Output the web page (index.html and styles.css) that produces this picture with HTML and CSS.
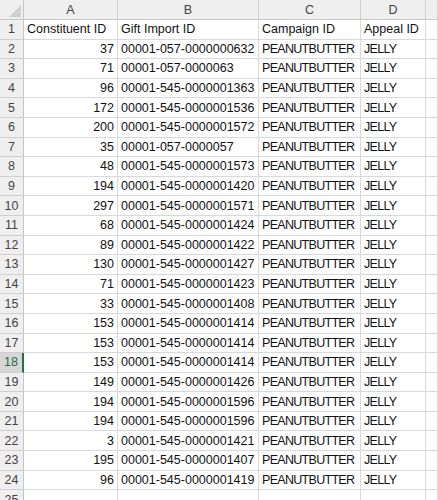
FILE: index.html
```html
<!DOCTYPE html>
<html>
<head>
<meta charset="utf-8">
<link rel="stylesheet" href="styles.css">
</head>
<body>
<div class="sheet">
  <div class="corner"><span class="tri"></span></div>
  <div class="colhead">A</div>
  <div class="colhead">B</div>
  <div class="colhead">C</div>
  <div class="colhead">D</div>
  <div class="colhead"></div>

  <div class="rowhead">1</div><div class="cell">Constituent ID</div><div class="cell">Gift Import ID</div><div class="cell">Campaign ID</div><div class="cell">Appeal ID</div><div class="cell"></div>
  <div class="rowhead">2</div><div class="cell num">37</div><div class="cell">00001-057-0000000632</div><div class="cell caps">PEANUTBUTTER</div><div class="cell caps">JELLY</div><div class="cell"></div>
  <div class="rowhead">3</div><div class="cell num">71</div><div class="cell">00001-057-0000063</div><div class="cell caps">PEANUTBUTTER</div><div class="cell caps">JELLY</div><div class="cell"></div>
  <div class="rowhead">4</div><div class="cell num">96</div><div class="cell">00001-545-0000001363</div><div class="cell caps">PEANUTBUTTER</div><div class="cell caps">JELLY</div><div class="cell"></div>
  <div class="rowhead">5</div><div class="cell num">172</div><div class="cell">00001-545-0000001536</div><div class="cell caps">PEANUTBUTTER</div><div class="cell caps">JELLY</div><div class="cell"></div>
  <div class="rowhead">6</div><div class="cell num">200</div><div class="cell">00001-545-0000001572</div><div class="cell caps">PEANUTBUTTER</div><div class="cell caps">JELLY</div><div class="cell"></div>
  <div class="rowhead">7</div><div class="cell num">35</div><div class="cell">00001-057-0000057</div><div class="cell caps">PEANUTBUTTER</div><div class="cell caps">JELLY</div><div class="cell"></div>
  <div class="rowhead">8</div><div class="cell num">48</div><div class="cell">00001-545-0000001573</div><div class="cell caps">PEANUTBUTTER</div><div class="cell caps">JELLY</div><div class="cell"></div>
  <div class="rowhead">9</div><div class="cell num">194</div><div class="cell">00001-545-0000001420</div><div class="cell caps">PEANUTBUTTER</div><div class="cell caps">JELLY</div><div class="cell"></div>
  <div class="rowhead">10</div><div class="cell num">297</div><div class="cell">00001-545-0000001571</div><div class="cell caps">PEANUTBUTTER</div><div class="cell caps">JELLY</div><div class="cell"></div>
  <div class="rowhead">11</div><div class="cell num">68</div><div class="cell">00001-545-0000001424</div><div class="cell caps">PEANUTBUTTER</div><div class="cell caps">JELLY</div><div class="cell"></div>
  <div class="rowhead">12</div><div class="cell num">89</div><div class="cell">00001-545-0000001422</div><div class="cell caps">PEANUTBUTTER</div><div class="cell caps">JELLY</div><div class="cell"></div>
  <div class="rowhead">13</div><div class="cell num">130</div><div class="cell">00001-545-0000001427</div><div class="cell caps">PEANUTBUTTER</div><div class="cell caps">JELLY</div><div class="cell"></div>
  <div class="rowhead">14</div><div class="cell num">71</div><div class="cell">00001-545-0000001423</div><div class="cell caps">PEANUTBUTTER</div><div class="cell caps">JELLY</div><div class="cell"></div>
  <div class="rowhead">15</div><div class="cell num">33</div><div class="cell">00001-545-0000001408</div><div class="cell caps">PEANUTBUTTER</div><div class="cell caps">JELLY</div><div class="cell"></div>
  <div class="rowhead">16</div><div class="cell num">153</div><div class="cell">00001-545-0000001414</div><div class="cell caps">PEANUTBUTTER</div><div class="cell caps">JELLY</div><div class="cell"></div>
  <div class="rowhead">17</div><div class="cell num">153</div><div class="cell">00001-545-0000001414</div><div class="cell caps">PEANUTBUTTER</div><div class="cell caps">JELLY</div><div class="cell"></div>
  <div class="rowhead sel">18</div><div class="cell num">153</div><div class="cell">00001-545-0000001414</div><div class="cell caps">PEANUTBUTTER</div><div class="cell caps">JELLY</div><div class="cell"></div>
  <div class="rowhead">19</div><div class="cell num">149</div><div class="cell">00001-545-0000001426</div><div class="cell caps">PEANUTBUTTER</div><div class="cell caps">JELLY</div><div class="cell"></div>
  <div class="rowhead">20</div><div class="cell num">194</div><div class="cell">00001-545-0000001596</div><div class="cell caps">PEANUTBUTTER</div><div class="cell caps">JELLY</div><div class="cell"></div>
  <div class="rowhead">21</div><div class="cell num">194</div><div class="cell">00001-545-0000001596</div><div class="cell caps">PEANUTBUTTER</div><div class="cell caps">JELLY</div><div class="cell"></div>
  <div class="rowhead">22</div><div class="cell num">3</div><div class="cell">00001-545-0000001421</div><div class="cell caps">PEANUTBUTTER</div><div class="cell caps">JELLY</div><div class="cell"></div>
  <div class="rowhead">23</div><div class="cell num">195</div><div class="cell">00001-545-0000001407</div><div class="cell caps">PEANUTBUTTER</div><div class="cell caps">JELLY</div><div class="cell"></div>
  <div class="rowhead">24</div><div class="cell num">96</div><div class="cell">00001-545-0000001419</div><div class="cell caps">PEANUTBUTTER</div><div class="cell caps">JELLY</div><div class="cell"></div>
  <div class="rowhead">25</div><div class="cell"></div><div class="cell"></div><div class="cell"></div><div class="cell"></div><div class="cell"></div>
</div>
</body>
</html>
```
FILE: styles.css
```css
html, body {
  margin: 0;
  padding: 0;
  background: #ffffff;
  overflow: hidden;
}
.sheet {
  display: grid;
  grid-template-columns: 24px 94px 141px 102px 65px 12px;
  grid-template-rows: 20px;
  grid-auto-rows: 19.6px;
  font-family: "Liberation Sans", Arial, sans-serif;
  font-size: 12.5px;
  color: #111;
}
.sheet > div {
  box-sizing: border-box;
  border-right: 1px solid #d9d9d9;
  border-bottom: 1px solid #d9d9d9;
  white-space: nowrap;
  overflow: hidden;
  display: flex;
  align-items: center;
}
.corner {
  background: #efefef;
  position: relative;
  border-right-color: #c6c6c6 !important;
  border-bottom-color: #c6c6c6 !important;
}
.tri {
  position: absolute;
  right: 2px;
  bottom: 2px;
  width: 0;
  height: 0;
  border-left: 12px solid transparent;
  border-bottom: 12px solid #cfcfcf;
}
.colhead {
  background: #efefef;
  color: #444;
  justify-content: center;
  border-bottom-color: #c6c6c6 !important;
  border-right-color: #d0d0d0 !important;
}
.rowhead {
  background: #efefef;
  color: #444;
  justify-content: center;
  border-right-color: #c6c6c6 !important;
  border-bottom-color: #d0d0d0 !important;
}
.rowhead.sel {
  background: #d6d6d6;
  color: #217346;
  border-right: 2px solid #217346 !important;
}
.cell {
  padding: 0 3px;
}
.cell.num {
  justify-content: flex-end;
}
.cell.caps {
  letter-spacing: -0.7px;
}
```
